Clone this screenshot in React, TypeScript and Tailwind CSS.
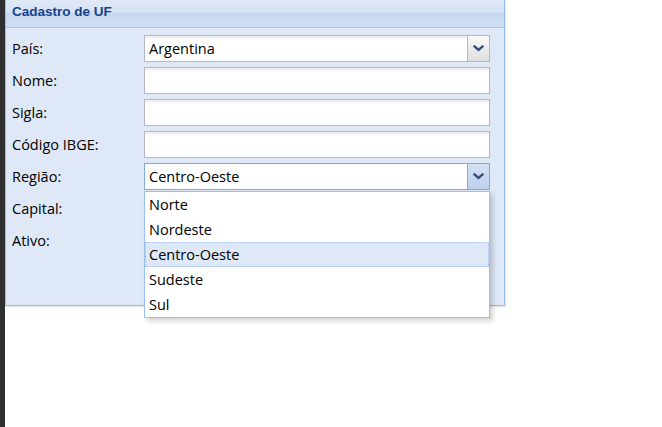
import React from "react";

const font = { fontFamily: '"Open Sans", "Liberation Sans", sans-serif' };

function Chevron({ color }: { color: string }) {
  return (
    <svg width="11" height="7" viewBox="0 0 11 7">
      <path d="M1.5 1.5 L5.5 5 L9.5 1.5" fill="none" stroke={color} strokeWidth="2.4" strokeLinecap="square" />
    </svg>
  );
}

function TextField({ value = "" }: { value?: string }) {
  return (
    <div className="flex h-[27px] w-[346px] items-center border border-[#b5b8c8] bg-[linear-gradient(#ebebeb,#ffffff_4px)] pl-1 text-[14.5px] text-black">
      {value}
    </div>
  );
}

function Combo({ value, focused, children }: { value: string; focused?: boolean; children?: React.ReactNode }) {
  return (
    <div
      className={
        focused
          ? "relative flex h-[27px] w-[346px] border border-[#7eadd9] bg-white"
          : "relative flex h-[27px] w-[346px] border border-[#b5b8c8] bg-[linear-gradient(#ebebeb,#ffffff_4px)]"
      }
    >
      <div className="flex flex-1 items-center pl-1 text-[14.5px] text-black">{value}</div>
      {focused ? (
        <div className="flex w-[22px] items-center justify-center border-l border-[#7eadd9] bg-[linear-gradient(#d4e2f4,#bcd0ec)]">
          <Chevron color="#34507c" />
        </div>
      ) : (
        <div className="flex w-[22px] items-center justify-center border-l border-[#b5b8c8] bg-[linear-gradient(#fafafa,#dedede)]">
          <Chevron color="#2e4f86" />
        </div>
      )}
      {children}
    </div>
  );
}

function Row({ label, children }: { label: string; children?: React.ReactNode }) {
  return (
    <div className="flex h-[27px] items-center">
      <div className="w-[132px] text-[14.5px] text-black">{label}</div>
      {children}
    </div>
  );
}

const regioes = ["Norte", "Nordeste", "Centro-Oeste", "Sudeste", "Sul"];

export default function App() {
  return (
    <div className="flex h-[427px] w-[662px] bg-white" style={font}>
      <div className="w-[5px] bg-[#2f2f2f]" />
      <div className="flex flex-col">
        <div className="flex h-[306px] w-[500px] flex-col border border-t-0 border-[#99bbe8] bg-[#dfe8f6] shadow-[1px_1px_2px_rgba(0,0,0,0.12)]">
          <div className="flex h-[28px] items-center border-b border-[#a9c5ea] bg-[linear-gradient(#dfe9f7,#d6e3f5_45%,#c6d8f1_50%,#cfdff4)] pl-[6px] pb-[2px]">
            <span className="text-[13.5px] font-bold text-[#15428b]" style={{ fontFamily: '"Liberation Sans", sans-serif' }}>
              Cadastro de UF
            </span>
          </div>
          <div className="flex flex-col gap-[5px] pl-[6px] pt-[7px]">
            <Row label="País:">
              <Combo value="Argentina" />
            </Row>
            <Row label="Nome:">
              <TextField />
            </Row>
            <Row label="Sigla:">
              <TextField />
            </Row>
            <Row label="Código IBGE:">
              <TextField />
            </Row>
            <Row label="Região:">
              <Combo value="Centro-Oeste" focused>
                <div className="absolute left-[-1px] top-[27px] z-10 flex w-[346px] flex-col border border-[#98c0f4] bg-white shadow-[3px_3px_5px_rgba(0,0,0,0.18)]">
                  {regioes.map((r) =>
                    r === "Centro-Oeste" ? (
                      <div key={r} className="flex h-[25px] items-center border border-dotted border-[#a3bae9] bg-[#dfe8f6] pl-[3px] text-[14.5px] text-black">
                        {r}
                      </div>
                    ) : (
                      <div key={r} className="flex h-[25px] items-center pl-1 text-[14.5px] text-black">
                        {r}
                      </div>
                    )
                  )}
                </div>
              </Combo>
            </Row>
            <Row label="Capital:">
              <TextField />
            </Row>
            <Row label="Ativo:" />
          </div>
        </div>
      </div>
    </div>
  );
}
